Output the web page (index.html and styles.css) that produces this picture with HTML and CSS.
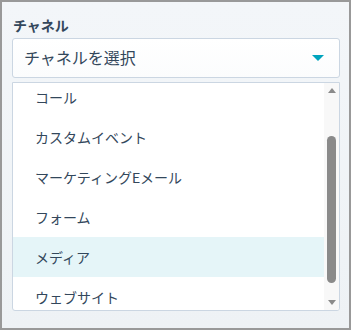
FILE: index.html
```
<!DOCTYPE html>
<html lang="ja">

<head>
  <meta charset="UTF-8">
  <meta name="viewport" content="width=device-width, initial-scale=1.0">
  <title>チャネル</title>
  <link rel="stylesheet" href="styles.css">
</head>

<body>
  <div class="frame">
    <p class="field_label">チャネル</p>

    <div class="select_box">
      <span class="select_text">チャネルを選択</span>
      <span class="caret"></span>
    </div>

    <!-- 下拉列表，已向下滚动几像素 -->
    <div class="dropdown">
      <div class="option_viewport">
        <ul class="option_list">
          <li class="option">コール</li>
          <li class="option">カスタムイベント</li>
          <li class="option">マーケティングEメール</li>
          <li class="option">フォーム</li>
          <li class="option option-active">メディア</li>
          <li class="option">ウェブサイト</li>
        </ul>
      </div>
      <div class="scroll_bar">
        <span class="scroll_arrow arrow-up"></span>
        <div class="scroll_track">
          <div class="scroll_thumb"></div>
        </div>
        <span class="scroll_arrow arrow-down"></span>
      </div>
    </div>
  </div>
</body>

</html>
```

FILE: styles.css
```
* {
  box-sizing: border-box;
  margin: 0;
  padding: 0;
  list-style: none;
}

body {
  font-family: "Lato", "Noto Sans CJK JP", sans-serif;
  color: #33475b;
}

.frame {
  width: 351px;
  height: 330px;
  border: 2px solid #999;
  background: linear-gradient(#f3f6f9, #eef2f5);
  padding: 14px 9px 0 10px;
}

.field_label {
  font-size: 14px;
  font-weight: 700;
  line-height: 20px;
  padding-left: 1px;
}

/* 选择框 */
.select_box {
  margin-top: 2px;
  height: 40px;
  display: flex;
  align-items: center;
  justify-content: space-between;
  padding: 0 15px 0 11px;
  border: 1px solid #cbd6e2;
  border-radius: 3px;
  background: linear-gradient(#fff, #fbfcfd);
}

.select_text {
  font-size: 16px;
  line-height: 22px;
}

.caret {
  width: 0;
  height: 0;
  border-left: 6px solid transparent;
  border-right: 6px solid transparent;
  border-top: 6px solid #00a4bd;
}

/* 下拉列表 */
.dropdown {
  margin-top: 4px;
  height: 229px;
  display: flex;
  border: 1px solid #cbd6e2;
  border-radius: 0 0 3px 3px;
  background: #fff;
  overflow: hidden;
}

.option_viewport {
  flex: 1;
  overflow: hidden;
}

.option_list {
  margin-top: -6px;
}

.option {
  height: 40px;
  display: flex;
  align-items: center;
  padding-left: 22px;
  font-size: 14px;
}

.option-active {
  background: #e5f5f8;
}

/* 滚动条 */
.scroll_bar {
  width: 15px;
  display: flex;
  flex-direction: column;
  align-items: center;
  background: #f8f8f8;
}

.scroll_arrow {
  height: 15px;
  display: flex;
  align-items: center;
  justify-content: center;
}

.scroll_arrow::before {
  content: '';
  width: 0;
  height: 0;
  border-left: 4px solid transparent;
  border-right: 4px solid transparent;
}

.arrow-up::before {
  border-bottom: 5px solid #8a8a8a;
}

.arrow-down::before {
  border-top: 5px solid #8a8a8a;
}

.scroll_track {
  flex: 1;
  width: 100%;
  display: flex;
  justify-content: center;
  padding: 38px 0 12px;
}

.scroll_thumb {
  width: 9px;
  height: 147px;
  border-radius: 5px;
  background: #8a8a8a;
}
```
